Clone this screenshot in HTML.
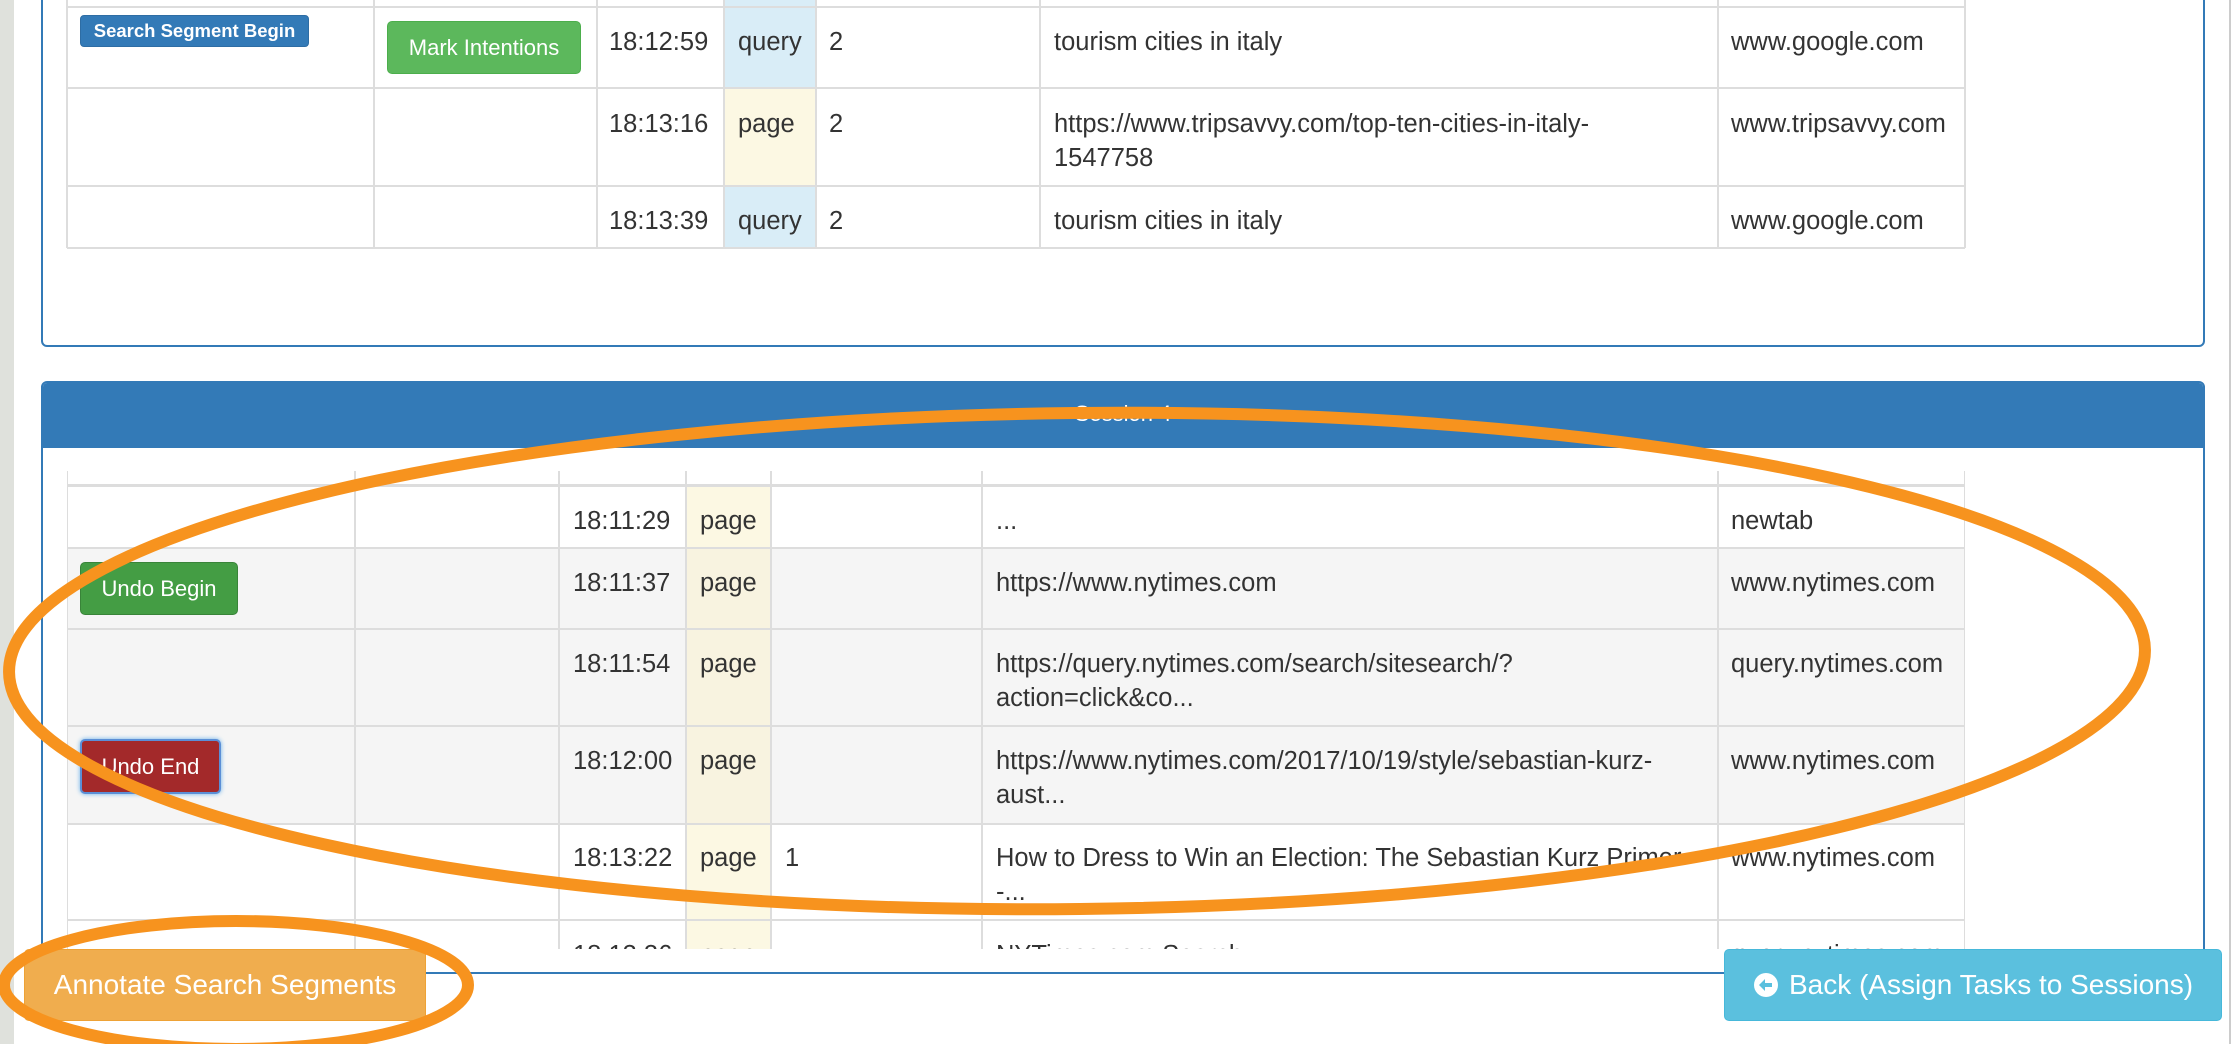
<!DOCTYPE html>
<html><head><meta charset="utf-8"><style>
*{box-sizing:border-box;margin:0;padding:0}
body{width:2238px;height:1044px;position:relative;overflow:hidden;background:#fff;font-family:"Liberation Sans",Arial,sans-serif;color:#333;font-size:25.5px}
.abs{position:absolute}
.vl{position:absolute;width:2px;background:#ddd}
.hl{position:absolute;height:2px;background:#ddd}
.t{position:absolute;line-height:34px;white-space:nowrap}
.btn{position:absolute;color:#fff;border-radius:5px;display:flex;align-items:center;justify-content:center;white-space:nowrap}
</style></head><body>
<div class="abs" style="left:0;top:0;width:14px;height:1044px;background:#dfe1dc"></div>
<div class="abs" style="left:2229px;top:0;width:2px;height:1044px;background:#ccc"></div>
<!-- top panel -->
<div class="abs" style="left:41px;top:-10px;width:2164px;height:357px;border:2px solid #337ab7;border-radius:6px"></div>
<div class="abs" style="left:724px;top:0;width:92px;height:7px;background:#d9edf7"></div>
<div class="abs" style="left:724px;top:7px;width:92px;height:81px;background:#d9edf7"></div>
<div class="abs" style="left:724px;top:88px;width:92px;height:98px;background:#fcf8e3"></div>
<div class="abs" style="left:724px;top:186px;width:92px;height:62px;background:#d9edf7"></div>
<div class="hl" style="left:67px;top:6px;width:1898px"></div>
<div class="hl" style="left:67px;top:87px;width:1898px"></div>
<div class="hl" style="left:67px;top:185px;width:1898px"></div>
<div class="hl" style="left:67px;top:247px;width:1898px"></div>
<div class="vl" style="left:66px;top:0;height:248px"></div>
<div class="vl" style="left:373px;top:0;height:248px"></div>
<div class="vl" style="left:596px;top:0;height:248px"></div>
<div class="vl" style="left:723px;top:0;height:248px"></div>
<div class="vl" style="left:815px;top:0;height:248px"></div>
<div class="vl" style="left:1039px;top:0;height:248px"></div>
<div class="vl" style="left:1717px;top:0;height:248px"></div>
<div class="vl" style="left:1964px;top:0;height:248px"></div>
<div class="btn" style="left:80px;top:15px;width:229px;height:32px;background:#337ab7;border:1px solid #2e6da4;font-weight:bold;font-size:18.5px;border-radius:4px">Search Segment Begin</div>
<div class="btn" style="left:387px;top:21px;width:194px;height:53px;background:#5cb85c;border:1px solid #4cae4c;font-size:22px">Mark Intentions</div>
<div class="t" style="left:609px;top:25px">18:12:59</div><div class="t" style="left:738px;top:25px">query</div><div class="t" style="left:829px;top:25px">2</div><div class="t" style="left:1054px;top:25px">tourism cities in italy</div><div class="t" style="left:1731px;top:25px">www.google.com</div>
<div class="t" style="left:609px;top:107px">18:13:16</div><div class="t" style="left:738px;top:107px">page</div><div class="t" style="left:829px;top:107px">2</div><div class="t" style="left:1054px;top:107px">https://www.tripsavvy.com/top-ten-cities-in-italy-<br>1547758</div><div class="t" style="left:1731px;top:107px">www.tripsavvy.com</div>
<div class="t" style="left:609px;top:204px">18:13:39</div><div class="t" style="left:738px;top:204px">query</div><div class="t" style="left:829px;top:204px">2</div><div class="t" style="left:1054px;top:204px">tourism cities in italy</div><div class="t" style="left:1731px;top:204px">www.google.com</div>
<!-- session panel -->
<div class="abs" style="left:41px;top:381px;width:2164px;height:593px;border:2px solid #337ab7;border-radius:6px;overflow:hidden">
<div style="height:65px;background:#337ab7;color:#fff;text-align:center;line-height:62px;font-size:22px">Session 4</div></div>
<div class="abs" style="left:67px;top:471px;width:1898px;height:478px;overflow:hidden">
<div class="abs" style="left:0;top:77px;width:1898px;height:276px;background:#f5f5f5"></div>
<div class="abs" style="left:619px;top:14px;width:85px;height:470px;background:#fcf8e3"></div>
<div class="abs" style="left:619px;top:77px;width:85px;height:276px;background:#f8f3e0"></div>
<div class="hl" style="left:0;top:13px;width:1898px;height:3px"></div>
<div class="hl" style="left:0;top:76px;width:1898px"></div>
<div class="hl" style="left:0;top:157px;width:1898px"></div>
<div class="hl" style="left:0;top:254px;width:1898px"></div>
<div class="hl" style="left:0;top:352px;width:1898px"></div>
<div class="hl" style="left:0;top:448px;width:1898px"></div>
<div class="vl" style="left:-1px;top:0;height:478px"></div>
<div class="vl" style="left:287px;top:0;height:478px"></div>
<div class="vl" style="left:491px;top:0;height:478px"></div>
<div class="vl" style="left:618px;top:0;height:478px"></div>
<div class="vl" style="left:703px;top:0;height:478px"></div>
<div class="vl" style="left:914px;top:0;height:478px"></div>
<div class="vl" style="left:1650px;top:0;height:478px"></div>
<div class="vl" style="left:1897px;top:0;height:478px"></div>
<div class="t" style="left:506px;top:33px">18:11:29</div><div class="t" style="left:633px;top:33px">page</div><div class="t" style="left:929px;top:33px">...</div><div class="t" style="left:1664px;top:33px">newtab</div>
<div class="t" style="left:506px;top:95px">18:11:37</div><div class="t" style="left:633px;top:95px">page</div><div class="t" style="left:929px;top:95px">https://www.nytimes.com</div><div class="t" style="left:1664px;top:95px">www.nytimes.com</div>
<div class="t" style="left:506px;top:176px">18:11:54</div><div class="t" style="left:633px;top:176px">page</div><div class="t" style="left:929px;top:176px">https://query.nytimes.com/search/sitesearch/?<br>action=click&amp;co...</div><div class="t" style="left:1664px;top:176px">query.nytimes.com</div>
<div class="t" style="left:506px;top:273px">18:12:00</div><div class="t" style="left:633px;top:273px">page</div><div class="t" style="left:929px;top:273px">https://www.nytimes.com/2017/10/19/style/sebastian-kurz-<br>aust...</div><div class="t" style="left:1664px;top:273px">www.nytimes.com</div>
<div class="t" style="left:506px;top:370px">18:13:22</div><div class="t" style="left:633px;top:370px">page</div><div class="t" style="left:718px;top:370px">1</div><div class="t" style="left:929px;top:370px">How to Dress to Win an Election: The Sebastian Kurz Primer<br>-...</div><div class="t" style="left:1664px;top:370px">www.nytimes.com</div>
<div class="t" style="left:506px;top:467px">18:13:36</div><div class="t" style="left:633px;top:467px">page</div><div class="t" style="left:929px;top:467px">NYTimes.com Search</div><div class="t" style="left:1664px;top:467px">query.nytimes.com</div>
</div>
<div class="btn" style="left:80px;top:562px;width:158px;height:53px;background:#449d44;border:1px solid #398439;font-size:22px">Undo Begin</div>
<div class="btn" style="left:80px;top:739px;width:141px;height:55px;background:#a3292a;border:2px solid #5b8fd6;box-shadow:0 0 5px #66afe9;font-size:22px">Undo End</div>
<div class="btn" style="left:24px;top:949px;width:402px;height:72px;background:#f0ad4e;border:1px solid #eea236;font-size:28px">Annotate Search Segments</div>
<div class="btn" style="left:1724px;top:949px;width:498px;height:72px;background:#5bc0de;border:1px solid #46b8da;font-size:28px"><svg width="26" height="26" viewBox="0 0 26 26" style="margin-right:10px"><circle cx="13" cy="13" r="12" fill="#fff"/><path d="M6 13l6-6v4h7v4h-7v4z" fill="#5bc0de"/></svg>Back (Assign Tasks to Sessions)</div>
<svg class="abs" style="left:0;top:0" width="2238" height="1044">
<ellipse cx="1077" cy="661" rx="1068" ry="248" fill="none" stroke="#f7931e" stroke-width="12" transform="rotate(-0.6 1077 661)"/>
<ellipse cx="236" cy="985" rx="232" ry="64" fill="none" stroke="#f7931e" stroke-width="12"/>
</svg>
</body></html>
